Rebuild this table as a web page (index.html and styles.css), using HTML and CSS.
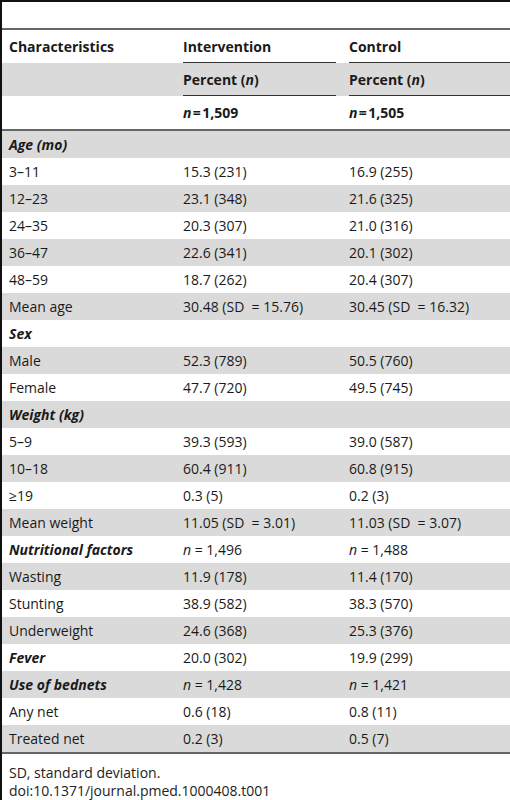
FILE: index.html
```html
<!DOCTYPE html>
<html lang="en">
<head>
    <meta charset="UTF-8">
    <meta name="viewport" content="width=device-width, initial-scale=1.0">
    <title>Table 1. Baseline characteristics</title>
    <link rel="stylesheet" href="styles.css">
</head>
<body>
    <div class="frame">
        <div class="caption-space"></div>

        <table class="data">
            <colgroup>
                <col class="c1">
                <col class="c2">
                <col class="c3">
            </colgroup>
            <thead>
                <tr>
                    <th>Characteristics</th>
                    <th class="rule">Intervention</th>
                    <th class="rule rule-end">Control</th>
                </tr>
                <tr class="shade">
                    <th></th>
                    <th class="rule">Percent (<i>n</i>)</th>
                    <th class="rule rule-end">Percent (<i>n</i>)</th>
                </tr>
                <tr>
                    <th></th>
                    <th><i>n</i>&#8202;=&#8202;1,509</th>
                    <th><i>n</i>&#8202;=&#8202;1,505</th>
                </tr>
            </thead>
            <tbody>
                <tr><td class="group">Age (mo)</td><td></td><td></td></tr>
                <tr><td>3–11</td><td>15.3 (231)</td><td>16.9 (255)</td></tr>
                <tr><td>12–23</td><td>23.1 (348)</td><td>21.6 (325)</td></tr>
                <tr><td>24–35</td><td>20.3 (307)</td><td>21.0 (316)</td></tr>
                <tr><td>36–47</td><td>22.6 (341)</td><td>20.1 (302)</td></tr>
                <tr><td>48–59</td><td>18.7 (262)</td><td>20.4 (307)</td></tr>
                <tr><td>Mean age</td><td>30.48 (SD&nbsp; = 15.76)</td><td>30.45 (SD&nbsp; = 16.32)</td></tr>
                <tr><td class="group">Sex</td><td></td><td></td></tr>
                <tr><td>Male</td><td>52.3 (789)</td><td>50.5 (760)</td></tr>
                <tr><td>Female</td><td>47.7 (720)</td><td>49.5 (745)</td></tr>
                <tr><td class="group">Weight (kg)</td><td></td><td></td></tr>
                <tr><td>5–9</td><td>39.3 (593)</td><td>39.0 (587)</td></tr>
                <tr><td>10–18</td><td>60.4 (911)</td><td>60.8 (915)</td></tr>
                <tr><td>≥19</td><td>0.3 (5)</td><td>0.2 (3)</td></tr>
                <tr><td>Mean weight</td><td>11.05 (SD&nbsp; = 3.01)</td><td>11.03 (SD&nbsp; = 3.07)</td></tr>
                <tr><td class="group">Nutritional factors</td><td><i>n</i> = 1,496</td><td><i>n</i> = 1,488</td></tr>
                <tr><td>Wasting</td><td>11.9 (178)</td><td>11.4 (170)</td></tr>
                <tr><td>Stunting</td><td>38.9 (582)</td><td>38.3 (570)</td></tr>
                <tr><td>Underweight</td><td>24.6 (368)</td><td>25.3 (376)</td></tr>
                <tr><td class="group">Fever</td><td>20.0 (302)</td><td>19.9 (299)</td></tr>
                <tr><td class="group">Use of bednets</td><td><i>n</i> = 1,428</td><td><i>n</i> = 1,421</td></tr>
                <tr><td>Any net</td><td>0.6 (18)</td><td>0.8 (11)</td></tr>
                <tr><td>Treated net</td><td>0.2 (3)</td><td>0.5 (7)</td></tr>
            </tbody>
        </table>

        <div class="notes">
            <p>SD, standard deviation.</p>
            <p>doi:10.1371/journal.pmed.1000408.t001</p>
        </div>
    </div>
</body>
</html>
```

FILE: styles.css
```css
body {
    margin: 0;
    background-color: #ffffff;
    font-family: "Open Sans", "Noto Sans", sans-serif;
    font-size: 14px;
    color: #1a1a1a;
}

.frame {
    border-left: 2px solid #111;
    border-top: 2px solid #111;
    height: 798px;
    overflow: hidden;
}

.caption-space {
    height: 26px;
}

.data {
    width: 100%;
    border-collapse: collapse;
    border-top: 2px solid #666;
    border-bottom: 2px solid #666;
}

col.c1 {
    width: 174px;
}

col.c2 {
    width: 166px;
}

th,
td {
    text-align: left;
    padding: 0 7px;
    white-space: nowrap;
}

thead th {
    height: 33px;
    font-weight: bold;
}

thead tr:last-child th {
    border-bottom: 2px solid #666;
}

.data i {
    font-style: italic;
}

/* short rules under the column headings */
.rule {
    background-image: linear-gradient(#333, #333);
    background-size: calc(100% - 13px) 1px;
    background-position: 7px 100%;
    background-repeat: no-repeat;
}

.rule.rule-end {
    background-size: calc(100% - 7px) 1px;
}

.shade,
tbody tr:nth-child(odd) {
    background-color: #dadada;
}

tbody td {
    height: 27px;
}

td.group {
    font-weight: bold;
    font-style: italic;
}

.notes {
    padding: 10px 7px 0;
    color: #222;
}

.notes p {
    margin: 0;
    line-height: 18px;
}
```
